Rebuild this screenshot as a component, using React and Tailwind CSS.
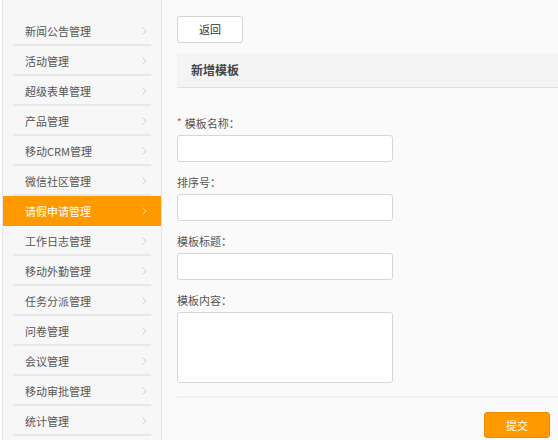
import React from "react";

const items = [
  "新闻公告管理",
  "活动管理",
  "超级表单管理",
  "产品管理",
  "移动CRM管理",
  "微信社区管理",
  "请假申请管理",
  "工作日志管理",
  "移动外勤管理",
  "任务分派管理",
  "问卷管理",
  "会议管理",
  "移动审批管理",
  "统计管理",
];

function Chevron({ color }) {
  return (
    <svg width="5" height="8" viewBox="0 0 5 8" className="shrink-0">
      <polyline points="0.5,0.5 4,4 0.5,7.5" fill="none" stroke={color} strokeWidth="1" />
    </svg>
  );
}

function Field({ label, required, children }) {
  return (
    <div className="flex flex-col shrink-0">
      <div className="h-5 shrink-0 leading-5 flex items-center text-[11px] text-[#555]">
        {required && <span className="text-[#e4393c] text-[10px] mr-[3px] -mt-[3px]">*</span>}
        <span>{label}</span>
      </div>
      <div className="mt-[2px] shrink-0">{children}</div>
    </div>
  );
}

export default function App() {
  return (
    <div
      className="w-[558px] h-[440px] overflow-hidden flex bg-[#fafafa]"
      style={{ fontFamily: '"Noto Sans CJK SC", "Noto Sans", sans-serif' }}
    >
      <div className="w-[2px] bg-white shrink-0" />
      <div className="w-[160px] shrink-0 bg-[#f7f7f7] border-l border-r border-[#e6e6e6] pt-4">
        {items.map((t, i) => {
          const active = i === 6;
          return (
            <div key={t} className={active ? "bg-[#ff9900]" : ""}>
              <div className="h-[28px] pt-[2px] flex items-center justify-between pl-[22px] pr-[14px]">
                <span className={`text-[11px] ${active ? "text-white" : "text-[#555]"}`}>{t}</span>
                <Chevron color={active ? "#ffe0b0" : "#cfcfcf"} />
              </div>
              <div className={`h-[2px] mx-[10px] ${active ? "bg-transparent" : "bg-[#e8e8e8]"}`} />
            </div>
          );
        })}
      </div>
      <div className="flex-1 flex flex-col pl-[15px] pt-4">
        <button className="shrink-0 w-[66px] h-[27px] bg-white border border-[#d4d4d4] rounded-[3px] text-[11px] text-[#333]">
          返回
        </button>
        <div className="shrink-0 mt-[10px] h-[35px] bg-[#f4f4f4] border-b border-[#dedede] flex items-center pl-[14px]">
          <span className="text-[12px] font-bold text-[#444]">新增模板</span>
        </div>
        <div className="shrink-0 pt-[25px] flex flex-col gap-[10px]">
          <Field label="模板名称：" required>
            <div className="w-[216px] h-[27px] bg-white border border-[#d6d6d6] rounded-[3px]" />
          </Field>
          <Field label="排序号：">
            <div className="w-[216px] h-[27px] bg-white border border-[#d6d6d6] rounded-[3px]" />
          </Field>
          <Field label="模板标题：">
            <div className="w-[216px] h-[27px] bg-white border border-[#d6d6d6] rounded-[3px]" />
          </Field>
          <Field label="模板内容：">
            <div className="w-[216px] h-[71px] bg-white border border-[#d6d6d6] rounded-[3px]" />
          </Field>
        </div>
        <div className="shrink-0 mt-[13px] h-[2px] bg-[#f0f0f0]" />
        <div className="shrink-0 flex justify-end pr-[8px] mt-[14px]">
          <button className="w-[66px] h-[26px] bg-[#ff9900] border border-[#f08c00] rounded-[3px] text-[11px] text-white">
            提交
          </button>
        </div>
      </div>
    </div>
  );
}
